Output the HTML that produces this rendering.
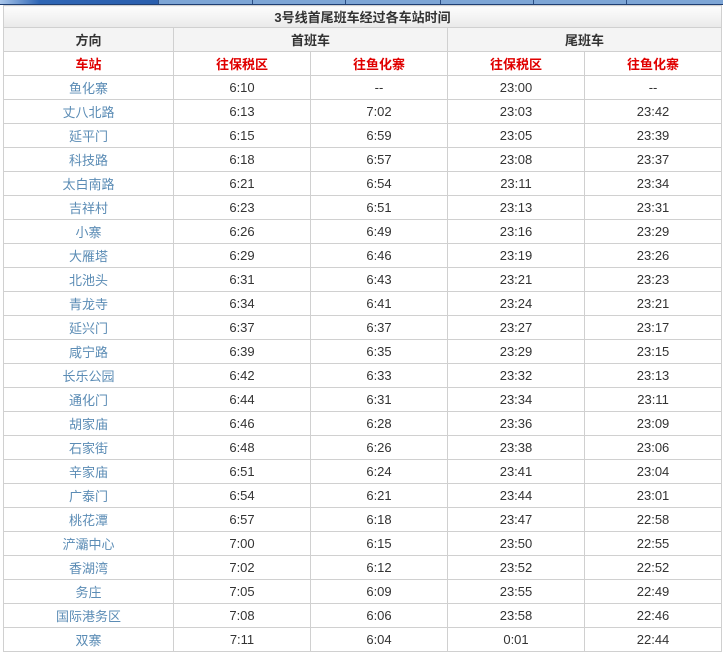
<!DOCTYPE html>
<html><head><meta charset="utf-8"><style>
body{margin:0;width:723px;height:651px;overflow:hidden;background:#fff;font-family:"Liberation Sans","Noto Sans CJK SC",sans-serif;}
.strip{position:absolute;left:0;top:0;width:723px;height:4px;background:#7ea6d6;border-bottom:1px solid #1f3f73;}
.strip .a{position:absolute;left:0;top:0;width:158px;height:4px;background:linear-gradient(90deg,#a9c6ea,#2f66b5 25%,#2b5fae);}
.strip i{position:absolute;top:0;width:1px;height:4px;background:#2c4f85;}
table{position:absolute;left:3px;top:5px;border-collapse:collapse;table-layout:fixed;width:718px;font-size:13px;color:#333;}
td{border:1px solid #d0d0d0;text-align:center;height:23px;padding:0;white-space:nowrap;}
.t td{background:linear-gradient(#fdfdfd,#e9e9e9);font-weight:bold;height:21px;}
.h td{background:#f4f4f4;font-weight:bold;}
.s td{color:#e00000;font-weight:bold;}
td.st{color:#5b8cb5;}
</style></head><body>
<div class="strip"><div class="a"></div><i style="left:158px"></i><i style="left:252px"></i><i style="left:345px"></i><i style="left:440px"></i><i style="left:533px"></i><i style="left:626px"></i></div>
<table>
<colgroup><col style="width:170px"><col style="width:137px"><col style="width:137px"><col style="width:137px"><col style="width:137px"></colgroup>
<tr class="t"><td colspan="5">3号线首尾班车经过各车站时间</td></tr>
<tr class="h"><td>方向</td><td colspan="2">首班车</td><td colspan="2">尾班车</td></tr>
<tr class="s"><td>车站</td><td>往保税区</td><td>往鱼化寨</td><td>往保税区</td><td>往鱼化寨</td></tr>
<tr><td class="st">鱼化寨</td><td>6:10</td><td>--</td><td>23:00</td><td>--</td></tr>
<tr><td class="st">丈八北路</td><td>6:13</td><td>7:02</td><td>23:03</td><td>23:42</td></tr>
<tr><td class="st">延平门</td><td>6:15</td><td>6:59</td><td>23:05</td><td>23:39</td></tr>
<tr><td class="st">科技路</td><td>6:18</td><td>6:57</td><td>23:08</td><td>23:37</td></tr>
<tr><td class="st">太白南路</td><td>6:21</td><td>6:54</td><td>23:11</td><td>23:34</td></tr>
<tr><td class="st">吉祥村</td><td>6:23</td><td>6:51</td><td>23:13</td><td>23:31</td></tr>
<tr><td class="st">小寨</td><td>6:26</td><td>6:49</td><td>23:16</td><td>23:29</td></tr>
<tr><td class="st">大雁塔</td><td>6:29</td><td>6:46</td><td>23:19</td><td>23:26</td></tr>
<tr><td class="st">北池头</td><td>6:31</td><td>6:43</td><td>23:21</td><td>23:23</td></tr>
<tr><td class="st">青龙寺</td><td>6:34</td><td>6:41</td><td>23:24</td><td>23:21</td></tr>
<tr><td class="st">延兴门</td><td>6:37</td><td>6:37</td><td>23:27</td><td>23:17</td></tr>
<tr><td class="st">咸宁路</td><td>6:39</td><td>6:35</td><td>23:29</td><td>23:15</td></tr>
<tr><td class="st">长乐公园</td><td>6:42</td><td>6:33</td><td>23:32</td><td>23:13</td></tr>
<tr><td class="st">通化门</td><td>6:44</td><td>6:31</td><td>23:34</td><td>23:11</td></tr>
<tr><td class="st">胡家庙</td><td>6:46</td><td>6:28</td><td>23:36</td><td>23:09</td></tr>
<tr><td class="st">石家街</td><td>6:48</td><td>6:26</td><td>23:38</td><td>23:06</td></tr>
<tr><td class="st">辛家庙</td><td>6:51</td><td>6:24</td><td>23:41</td><td>23:04</td></tr>
<tr><td class="st">广泰门</td><td>6:54</td><td>6:21</td><td>23:44</td><td>23:01</td></tr>
<tr><td class="st">桃花潭</td><td>6:57</td><td>6:18</td><td>23:47</td><td>22:58</td></tr>
<tr><td class="st">浐灞中心</td><td>7:00</td><td>6:15</td><td>23:50</td><td>22:55</td></tr>
<tr><td class="st">香湖湾</td><td>7:02</td><td>6:12</td><td>23:52</td><td>22:52</td></tr>
<tr><td class="st">务庄</td><td>7:05</td><td>6:09</td><td>23:55</td><td>22:49</td></tr>
<tr><td class="st">国际港务区</td><td>7:08</td><td>6:06</td><td>23:58</td><td>22:46</td></tr>
<tr><td class="st">双寨</td><td>7:11</td><td>6:04</td><td>0:01</td><td>22:44</td></tr>
</table>
</body></html>
